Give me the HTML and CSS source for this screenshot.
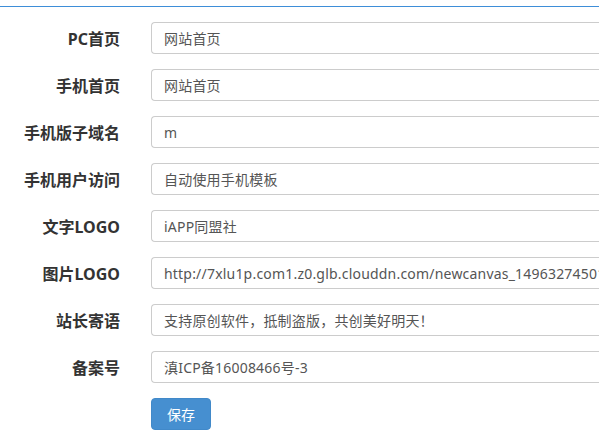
FILE: index.html
```html
<!DOCTYPE html>
<html lang="zh-CN">
<head>
<meta charset="utf-8">
<title>设置</title>
<link rel="stylesheet" href="styles.css">
</head>
<body>
<div class="topline"></div>
<form class="form">
  <div class="row"><label class="label">PC首页</label><input class="input" value="网站首页"></div>
  <div class="row"><label class="label">手机首页</label><input class="input" value="网站首页"></div>
  <div class="row"><label class="label">手机版子域名</label><input class="input" value="m"></div>
  <div class="row"><label class="label">手机用户访问</label><input class="input" value="自动使用手机模板"></div>
  <div class="row"><label class="label">文字LOGO</label><input class="input" value="iAPP同盟社"></div>
  <div class="row"><label class="label">图片LOGO</label><input class="input" value="http://7xlu1p.com1.z0.glb.clouddn.com/newcanvas_1496327450123.png"></div>
  <div class="row"><label class="label">站长寄语</label><input class="input" value="支持原创软件，抵制盗版，共创美好明天！"></div>
  <div class="row"><label class="label">备案号</label><input class="input" value="滇ICP备16008466号-3"></div>
  <div class="row"><span class="label"></span><button type="button" class="btn">保存</button></div>
</form>
</body>
</html>
```
FILE: styles.css
```css
html, body {
  margin: 0;
  padding: 0;
  background: #fff;
  overflow: hidden;
  font-family: "Noto Sans", "Noto Sans CJK SC", sans-serif;
}
.topline {
  margin-top: 6px;
  height: 1px;
  width: 599px;
  background: #3e8ed8;
}
.form {
  display: flex;
  flex-direction: column;
  gap: 15px;
  padding-top: 15px;
}
.row {
  display: flex;
  align-items: center;
  gap: 31px;
  height: 32px;
}
.label {
  flex: 0 0 120px;
  text-align: right;
  font-size: 16px;
  font-weight: bold;
  color: #333;
}
.input {
  box-sizing: border-box;
  flex: 0 0 448px;
  width: 448px;
  height: 32px;
  padding: 0 0 0 12px;
  border: 1px solid #ccc;
  border-right: none;
  border-radius: 4px 0 0 4px;
  font-family: "Noto Sans", "Noto Sans CJK SC", sans-serif;
  font-size: 14px;
  letter-spacing: 0.2px;
  color: #555;
  background: #fff;
  outline: none;
}
.btn {
  box-sizing: border-box;
  width: 60px;
  height: 32px;
  border: 1px solid #4189c9;
  border-radius: 4px;
  background: #468fd0;
  color: #fff;
  font-family: "Noto Sans", "Noto Sans CJK SC", sans-serif;
  font-size: 14px;
  padding: 0;
}
```
